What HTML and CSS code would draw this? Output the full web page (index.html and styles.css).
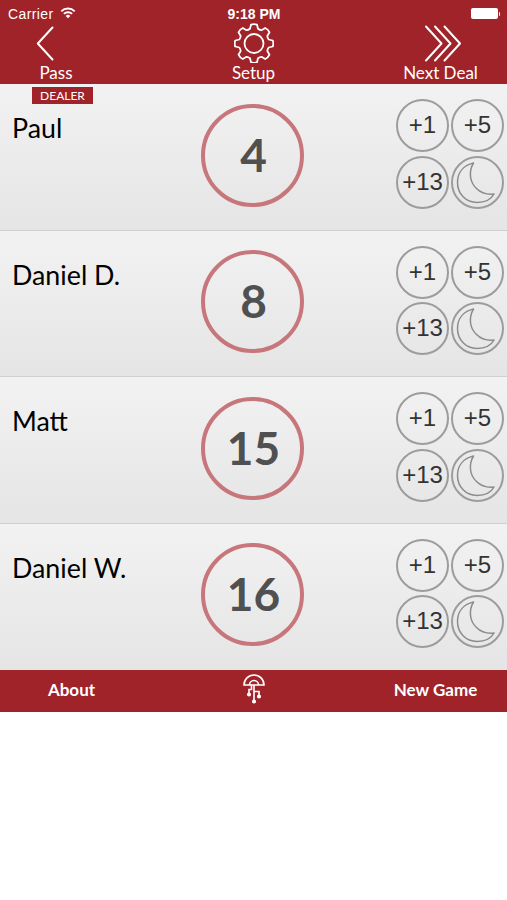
FILE: index.html
```html
<!DOCTYPE html>
<html>
<head>
  <meta charset="utf-8">
  <title>Hearts Score Keeper</title>
  <link rel="stylesheet" href="styles.css">
</head>
<body>
  <svg width="0" height="0" class="defs">
    <symbol id="moon" viewBox="2 2 49 49">
      <path d="M22.500 7C12 9.500 6.500 17 6.500 26.500C6.500 38 15 46.500 26 46.500C34 46.500 40 43.500 43 38C36 38.800 30 37 25.500 32.500C18.500 26 17.500 15.500 22.500 7Z"/>
    </symbol>
  </svg>
  <div class="app">
    <div class="header">
      <div class="status">
        <div class="carrier">
          <span>Carrier</span>
          <svg class="wifi" width="16" height="12" viewBox="0 0 16 12">
            <path d="M1.300 4.300a9.500 9.500 0 0 1 13.400 0M3.900 6.900a5.800 5.800 0 0 1 8.200 0"/>
            <path class="dot" d="M8 11.300L5.700 8.900a3.300 3.300 0 0 1 4.600 0Z"/>
          </svg>
        </div>
        <div class="time">9:18 PM</div>
        <div class="power">
          <div class="battery"></div>
          <div class="battery-tip"></div>
        </div>
      </div>
      <div class="nav">
        <div class="nav-item nav-pass">
          <svg width="40" height="40" viewBox="0 0 40 40"><path d="M16.500 4.500L1.800 20.500L16.500 36.500"/></svg>
          <span>Pass</span>
        </div>
        <div class="nav-item nav-setup">
          <svg width="40" height="40" viewBox="-20 -20.500 40 40">
            <path d="M-3 -18.800Q0 -19.800 3 -18.800L4 -14.700Q5.700 -13.400 7.500 -13.300L11.200 -15.500Q14.200 -14.200 15.500 -11.200L13.300 -7.500Q13.400 -5.700 14.700 -4L18.800 -3Q19.800 0 18.800 3L14.700 4Q13.400 5.700 13.300 7.500L15.500 11.200Q14.200 14.200 11.200 15.500L7.500 13.300Q5.700 13.400 4 14.700L3 18.800Q0 19.800 -3 18.800L-4 14.700Q-5.700 13.400 -7.500 13.300L-11.200 15.500Q-14.200 14.200 -15.500 11.200L-13.300 7.500Q-13.400 5.700 -14.700 4L-18.800 3Q-19.800 0 -18.800 -3L-14.700 -4Q-13.400 -5.700 -13.300 -7.500L-15.500 -11.200Q-14.200 -14.200 -11.200 -15.500L-7.500 -13.300Q-5.700 -13.400 -4 -14.700Z"/>
            <circle r="9.500"/>
          </svg>
          <span>Setup</span>
        </div>
        <div class="nav-item nav-next">
          <svg width="42" height="40" viewBox="0 0 42 40"><path d="M6 3.500L21.500 20.500L6 37.500M15 3.500L30.500 20.500L15 37.500M24.500 3.500L40 20.500L24.500 37.500"/></svg>
          <span>Next Deal</span>
        </div>
      </div>
    </div>

    <div class="player">
      <div class="dealer">DEALER</div>
      <div class="name">Paul</div>
      <div class="score">4</div>
      <div class="buttons">
        <div class="btn">+1</div>
        <div class="btn">+5</div>
        <div class="btn">+13</div>
        <div class="btn"><svg><use href="#moon"/></svg></div>
      </div>
    </div>
    <div class="player">
      <div class="name">Daniel D.</div>
      <div class="score">8</div>
      <div class="buttons">
        <div class="btn">+1</div>
        <div class="btn">+5</div>
        <div class="btn">+13</div>
        <div class="btn"><svg><use href="#moon"/></svg></div>
      </div>
    </div>
    <div class="player">
      <div class="name">Matt</div>
      <div class="score">15</div>
      <div class="buttons">
        <div class="btn">+1</div>
        <div class="btn">+5</div>
        <div class="btn">+13</div>
        <div class="btn"><svg><use href="#moon"/></svg></div>
      </div>
    </div>
    <div class="player">
      <div class="name">Daniel W.</div>
      <div class="score">16</div>
      <div class="buttons">
        <div class="btn">+1</div>
        <div class="btn">+5</div>
        <div class="btn">+13</div>
        <div class="btn"><svg><use href="#moon"/></svg></div>
      </div>
    </div>

    <div class="footer">
      <div class="footer-left">About</div>
      <svg width="24" height="32" viewBox="0 0 24 32">
        <path d="M2 12A10 10 0 0 1 22 12ZM7.500 12a4.500 4.500 0 0 1 9 0M12 12V28M7 21V16.500H9.500V12M12 18.500H17V22"/>
        <circle cx="7" cy="21.500" r="1.300"/>
        <circle cx="12" cy="28.500" r="1.300"/>
        <circle cx="17" cy="23.500" r="1.300"/>
      </svg>
      <div class="footer-right">New Game</div>
    </div>
  </div>
</body>
</html>
```
FILE: styles.css
```css
body {
  margin: 0;
  background-color: white;
  font-family: Lato, sans-serif;
}
.defs {
  display: block;
}
.app {
  width: 507px;
}
.header {
  height: 84px;
  background-color: #a0232a;
  color: white;
}
.status {
  display: grid;
  grid-template-columns: 1fr 1fr 1fr;
  align-items: center;
  height: 23px;
  padding: 4px 7px 0 8px;
  box-sizing: border-box;
  font-family: "Liberation Sans", Arial, sans-serif;
  font-size: 14px;
}
.carrier {
  display: flex;
  align-items: center;
  gap: 6px;
  letter-spacing: 0.400px;
}
.wifi {
  margin-top: -2px;
}
.wifi path {
  fill: none;
  stroke: white;
  stroke-width: 1.900;
}
.wifi .dot {
  fill: white;
  stroke: none;
}
.time {
  text-align: center;
  font-weight: bold;
  font-size: 14px;
}
.power {
  display: flex;
  justify-content: flex-end;
  align-items: center;
  gap: 1px;
}
.battery {
  width: 27px;
  height: 11px;
  margin-top: -1px;
  border-radius: 2px;
  background-color: white;
}
.battery-tip {
  width: 1.500px;
  height: 4px;
  border-radius: 0 2px 2px 0;
  background-color: white;
}
.nav {
  display: grid;
  grid-template-columns: 112px 1fr 133px;
}
.nav-item {
  display: flex;
  flex-direction: column;
  align-items: center;
  font-size: 17px;
  line-height: 19px;
}
.nav-item svg {
  fill: none;
  stroke: white;
  stroke-width: 2;
  stroke-linecap: round;
  stroke-linejoin: round;
}
.nav-setup {
  padding-left: 21px;
}
.nav-setup svg {
  stroke-width: 1.800;
}
.player {
  position: relative;
  display: grid;
  grid-template-columns: 201px 103px 1fr;
  height: 146.600px;
  box-sizing: border-box;
  padding-top: 15px;
  background: linear-gradient(#f2f2f2, #e5e5e5);
  border-bottom: 1px solid #d0d0d0;
}
.player:nth-child(5) {
  border-bottom: none;
}
/* tag hanging from the header over the dealer's name */
.dealer {
  position: absolute;
  top: 2.500px;
  left: 32px;
  width: 61px;
  height: 17px;
  background-color: #a0232a;
  color: white;
  font-size: 12px;
  line-height: 18px;
  text-align: center;
}
.name {
  padding: 12px 0 0 12px;
  font-size: 26.800px;
  line-height: 34px;
  color: black;
}
.score {
  width: 103px;
  height: 103px;
  margin-top: 4.500px;
  padding-left: 2px;
  box-sizing: border-box;
  border: 4px solid #c7777b;
  border-radius: 50%;
  font-size: 46px;
  font-weight: bold;
  line-height: 94px;
  text-align: center;
  color: #505050;
}
.buttons {
  display: grid;
  grid-template-columns: 53px 53px;
  grid-auto-rows: 53px;
  gap: 3.500px 2px;
  justify-content: end;
  padding-right: 3px;
}
.btn {
  box-sizing: border-box;
  border: 2px solid #9c9c9c;
  border-radius: 50%;
  font-family: "Liberation Sans", Arial, sans-serif;
  font-size: 24px;
  line-height: 48px;
  text-align: center;
  color: #333;
}
.btn svg {
  display: block;
  width: 49px;
  height: 49px;
  fill: none;
  stroke: #8c8c8c;
  stroke-width: 1.500;
  stroke-linejoin: round;
}
.footer {
  display: grid;
  grid-template-columns: 143px 1fr 143px;
  align-items: center;
  justify-items: center;
  height: 42px;
  padding-bottom: 4px;
  box-sizing: border-box;
  background-color: #a0232a;
  color: white;
  font-size: 17px;
  font-weight: bold;
}
.footer svg {
  fill: none;
  stroke: white;
  stroke-width: 1.600;
}
.footer circle {
  fill: white;
}
```
